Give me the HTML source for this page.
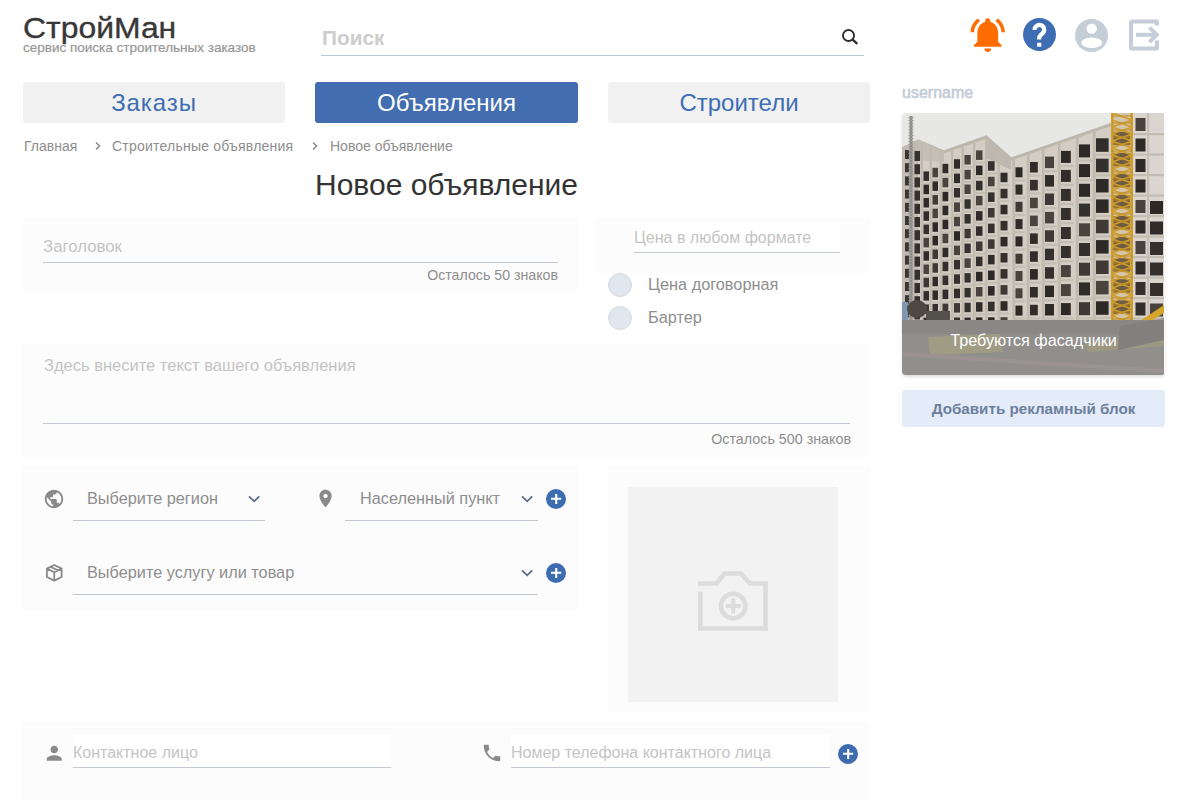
<!DOCTYPE html>
<html><head><meta charset="utf-8">
<style>
*{box-sizing:border-box;margin:0;padding:0}
html,body{width:1200px;height:800px;overflow:hidden;background:#fff;font-family:"Liberation Sans",sans-serif}
.a{position:absolute}
.t{white-space:nowrap;line-height:1}
.card{position:absolute;background:#fcfcfc}
.ul{position:absolute;height:1px;background:#c3c9d1}
.nav{position:absolute;top:82px;height:41px;border-radius:3px;background:#f1f1f1;color:#3d6db5;text-align:center;line-height:41px}
.nav.act{background:#426db0;color:#fff}
.ph{color:#c4c4c4}
.gr{color:#8e8e8e}
svg{position:absolute;overflow:visible}
</style></head><body>

<!-- header -->
<div class="a t" style="left:23px;top:14px;font-size:29px;color:#383838;transform:scaleX(1.1);transform-origin:0 0;-webkit-text-stroke:0.35px #383838">СтройМан</div>
<div class="a t" style="left:23px;top:41px;font-size:13.5px;color:#979797;-webkit-text-stroke:0.2px #979797">сервис поиска строительных заказов</div>

<div class="a t" style="left:322px;top:28px;font-size:20.8px;font-weight:bold;color:#cdcdcd">Поиск</div>
<div class="ul" style="left:321px;top:55px;width:543px;background:#bcc5d0"></div>
<svg style="left:839px;top:26px" width="24" height="24" viewBox="0 0 24 24"><circle cx="9.5" cy="9.5" r="5.55" fill="none" stroke="#2e2e2e" stroke-width="1.9"/><path d="M13.4 13.4L18.3 17.9" stroke="#2e2e2e" stroke-width="2.4"/></svg>

<!-- header icons -->
<svg style="left:967px;top:14px" width="41.5" height="41.5" viewBox="0 0 24 24"><path fill="#ff6d00" d="M7.58 4.08L6.15 2.65C3.75 4.48 2.17 7.3 2.03 10.5h2c.15-2.65 1.51-4.97 3.55-6.42zm12.39 6.42h2c-.15-3.2-1.73-6.02-4.12-7.85l-1.42 1.43c2.02 1.45 3.39 3.77 3.54 6.42zM18 11c0-3.07-1.64-5.64-4.5-6.32V4c0-.83-.67-1.5-1.5-1.5s-1.5.67-1.5 1.5v.68C7.63 5.36 6 7.92 6 11v5l-2 2v1h16v-1l-2-2v-5zm-6 11c.14 0 .27-.01.4-.04.65-.14 1.18-.58 1.44-1.18.1-.24.15-.5.15-.78h-4c.01 1.1.9 2 2.01 2z"/></svg>
<svg style="left:1023px;top:18px" width="33" height="33" viewBox="0 0 33 33"><circle cx="16.5" cy="16.5" r="16.5" fill="#3f6db4"/><path d="M11.6 11.9A4.8 4.8 0 1 1 19.1 15.7C17.2 17.1 16.2 17.9 16.2 20.2V21.6" fill="none" stroke="#fff" stroke-width="4.2"/><rect x="14.1" y="24.7" width="4.2" height="4" fill="#fff"/></svg>
<svg style="left:1074.5px;top:18.5px" width="33" height="33" viewBox="0 0 33 33"><circle cx="16.5" cy="16.5" r="16.5" fill="#c5cdd8"/><circle cx="16.7" cy="9.6" r="5.2" fill="#fff"/><ellipse cx="16.7" cy="23.8" rx="10.5" ry="5.3" fill="#fff"/></svg>
<svg style="left:1129px;top:20px" width="31" height="31" viewBox="0 0 31 31"><path d="M28 5.5V2.5a1 1 0 0 0-1-1H3a1 1 0 0 0-1 1v25a1 1 0 0 0 1 1h24a1 1 0 0 0 1-1v-7" fill="none" stroke="#c5cdd8" stroke-width="4"/><path d="M7 14.8H27" stroke="#c5cdd8" stroke-width="4" fill="none"/><path d="M20.5 7.6L27.8 14.8L20.5 22" stroke="#c5cdd8" stroke-width="4" fill="none"/></svg>

<!-- nav -->
<div class="nav" style="left:23px;width:262px;font-size:24px;letter-spacing:0.9px">Заказы</div>
<div class="nav act" style="left:315px;width:263px;font-size:24px">Объявления</div>
<div class="nav" style="left:608px;width:262px;font-size:24px">Строители</div>

<!-- breadcrumb -->
<div class="a t gr" style="left:24px;top:139px;font-size:14px">Главная</div>
<svg style="left:94px;top:141px" width="8" height="10" viewBox="0 0 8 10"><path d="M2 1.5L5.5 5L2 8.5" fill="none" stroke="#8e8e8e" stroke-width="1.6"/></svg>
<div class="a t gr" style="left:112px;top:139px;font-size:14px;letter-spacing:0.22px">Строительные объявления</div>
<svg style="left:311px;top:141px" width="8" height="10" viewBox="0 0 8 10"><path d="M2 1.5L5.5 5L2 8.5" fill="none" stroke="#8e8e8e" stroke-width="1.6"/></svg>
<div class="a t gr" style="left:330px;top:139px;font-size:14px">Новое объявление</div>

<div class="a t" style="left:315px;top:170px;font-size:30px;color:#333">Новое объявление</div>

<!-- card title -->
<div class="card" style="left:23px;top:218px;width:555px;height:75px"></div>
<div class="a t ph" style="left:43px;top:239px;font-size:16.8px">Заголовок</div>
<div class="ul" style="left:43px;top:262px;width:515px"></div>
<div class="a t gr" style="right:642px;top:268px;font-size:14.2px">Осталось 50 знаков</div>

<!-- price -->
<div class="card" style="left:595px;top:218px;width:275px;height:54.5px"></div>
<div class="a" style="left:634px;top:222px;width:206px;height:31px;background:#fff"></div>
<div class="a t ph" style="left:634px;top:230px;font-size:16px">Цена в любом формате</div>
<div class="ul" style="left:634px;top:252px;width:206px"></div>
<div class="a" style="left:608px;top:273px;width:24px;height:24px;border-radius:50%;background:#e1e7ee;border:1px solid #d6dbe1"></div>
<div class="a t gr" style="left:648px;top:276px;font-size:16.3px">Цена договорная</div>
<div class="a" style="left:608px;top:306px;width:24px;height:24px;border-radius:50%;background:#e1e7ee;border:1px solid #d6dbe1"></div>
<div class="a t gr" style="left:648px;top:309px;font-size:16.3px">Бартер</div>

<!-- text card -->
<div class="card" style="left:22px;top:344px;width:847px;height:113px"></div>
<div class="a t ph" style="left:44px;top:357px;font-size:16.5px">Здесь внесите текст вашего объявления</div>
<div class="ul" style="left:43px;top:423px;width:807px"></div>
<div class="a t gr" style="right:349px;top:432px;font-size:14.3px">Осталось 500 знаков</div>

<!-- region card -->
<div class="card" style="left:22px;top:466px;width:556px;height:145px"></div>
<svg style="left:43px;top:487.5px" width="22" height="22" viewBox="0 0 24 24"><path fill="#8a8a8a" d="M12 2C6.48 2 2 6.48 2 12s4.48 10 10 10 10-4.48 10-10S17.52 2 12 2zm-1 17.93c-3.950-.49-7-3.850-7-7.930 0-.62.08-1.210.21-1.790L9 15v1c0 1.100.9 2 2 2v1.930zm6.900-2.540c-.26-.81-1-1.390-1.900-1.390h-1v-3c0-.55-.45-1-1-1H8v-2h2c.55 0 1-.45 1-1V7h2c1.100 0 2-.9 2-2v-.41c2.930 1.190 5 4.060 5 7.410 0 2.080-.8 3.970-2.100 5.390z"/></svg>
<div class="a t gr" style="left:87px;top:490px;font-size:16.3px">Выберите регион</div>
<svg style="left:248px;top:494px" width="12" height="9" viewBox="0 0 12 9"><path d="M1 2.4L6.2 7.3L11.2 2.4" fill="none" stroke="#5b6c86" stroke-width="1.8"/></svg>
<div class="ul" style="left:73px;top:520px;width:192px"></div>
<svg style="left:315.4px;top:488.1px" width="21.1" height="21.1" viewBox="0 0 24 24"><path fill="#8a8a8a" d="M12 2C8.130 2 5 5.130 5 9c0 5.250 7 13 7 13s7-7.750 7-13c0-3.870-3.130-7-7-7zm0 9.500c-1.380 0-2.500-1.120-2.500-2.500s1.120-2.500 2.500-2.500 2.500 1.120 2.500 2.500-1.120 2.500-2.500 2.500z"/></svg>
<div class="a t gr" style="left:360px;top:490px;font-size:16.3px">Населенный пункт</div>
<svg style="left:521px;top:494px" width="12" height="9" viewBox="0 0 12 9"><path d="M1 2.4L6.2 7.3L11.2 2.4" fill="none" stroke="#5b6c86" stroke-width="1.8"/></svg>
<div class="ul" style="left:345px;top:520px;width:193px"></div>
<svg style="left:546px;top:489px" width="20" height="20" viewBox="0 0 20 20"><circle cx="10" cy="10" r="10" fill="#3e6cb0"/><path d="M10.2 4.9V15M5 9.8H15.2" stroke="#fff" stroke-width="2.1"/></svg>

<svg style="left:0;top:0" width="1" height="1" viewBox="0 0 1 1"><path d="M54.25 565L46.9 568.6V577L54.25 580.6L61.6 577V568.6Z M46.9 568.6L54.25 572.2L61.6 568.6 M54.25 572.2V580.6 M50.5 566.8L57.9 570.4" fill="none" stroke="#8a8a8a" stroke-width="1.8" stroke-linejoin="round"/></svg>
<div class="a t gr" style="left:87px;top:564px;font-size:16.3px">Выберите услугу или товар</div>
<svg style="left:521px;top:568px" width="12" height="9" viewBox="0 0 12 9"><path d="M1 2.4L6.2 7.3L11.2 2.4" fill="none" stroke="#5b6c86" stroke-width="1.8"/></svg>
<div class="ul" style="left:73px;top:594px;width:465px"></div>
<svg style="left:546px;top:563px" width="20" height="20" viewBox="0 0 20 20"><circle cx="10" cy="10" r="10" fill="#3e6cb0"/><path d="M10.2 4.9V15M5 9.8H15.2" stroke="#fff" stroke-width="2.1"/></svg>

<!-- photo card -->
<div class="card" style="left:608px;top:466px;width:262px;height:246px"></div>
<div class="a" style="left:628px;top:487px;width:210px;height:215px;background:#f2f2f2"></div>
<svg style="left:0;top:0" width="1" height="1" viewBox="0 0 1 1"><path d="M698 583.5H716.5L724.5 573.5H741L750 583.5H765.5V628.5H700.3V591.5" fill="none" stroke="#dcdcdc" stroke-width="4.5"/><circle cx="733.2" cy="606" r="12.3" fill="none" stroke="#dcdcdc" stroke-width="4.5"/><path d="M733.2 598.5V613.5M725.7 606H740.7" stroke="#dcdcdc" stroke-width="4"/></svg>

<!-- contact card -->
<div class="card" style="left:22px;top:722px;width:847px;height:78px"></div>
<svg style="left:42.9px;top:741.9px" width="22.5" height="22.5" viewBox="0 0 24 24"><path fill="#8a8a8a" d="M12 12c2.210 0 4-1.790 4-4s-1.790-4-4-4-4 1.790-4 4 1.790 4 4 4zm0 2c-2.670 0-8 1.340-8 4v2h16v-2c0-2.660-5.330-4-8-4z"/></svg>
<div class="a" style="left:73px;top:735px;width:318px;height:32px;background:#fff"></div>
<div class="a t ph" style="left:73px;top:744.5px;font-size:16px">Контактное лицо</div>
<div class="ul" style="left:73px;top:767px;width:318px"></div>
<svg style="left:481.2px;top:742px" width="22" height="22" viewBox="0 0 24 24"><path fill="#8a8a8a" d="M6.620 10.790c1.440 2.830 3.760 5.140 6.590 6.590l2.200-2.200c.27-.27.67-.36 1.020-.24 1.120.37 2.330.57 3.570.57.55 0 1 .45 1 1V20c0 .55-.45 1-1 1-9.390 0-17-7.610-17-17 0-.55.45-1 1-1h3.500c.55 0 1 .45 1 1 0 1.250.2 2.450.57 3.570.11.35.03.74-.25 1.020l-2.200 2.200z"/></svg>
<div class="a" style="left:511px;top:735px;width:319px;height:32px;background:#fff"></div>
<div class="a t ph" style="left:511px;top:744.5px;font-size:16px">Номер телефона контактного лица</div>
<div class="ul" style="left:511px;top:767px;width:319px"></div>
<svg style="left:838.3px;top:744px" width="20" height="20" viewBox="0 0 20 20"><circle cx="10" cy="10" r="10" fill="#3e6cb0"/><path d="M10.2 4.9V15M5 9.8H15.2" stroke="#fff" stroke-width="2.1"/></svg>

<!-- right column -->
<div class="a t" style="left:902px;top:84.5px;font-size:16px;color:#c3cbd7;-webkit-text-stroke:0.55px #c3cbd7">username</div>
<div class="a" style="left:902px;top:113px;width:263px;height:262px;border-radius:4px;overflow:hidden;box-shadow:0 2px 3px rgba(0,0,0,0.12)">
<svg style="left:0;top:0" width="263" height="262" viewBox="0 0 263 262" preserveAspectRatio="none"><defs><linearGradient id="sky" x1="0" y1="0" x2="0" y2="1"><stop offset="0" stop-color="#e8e8e7"/><stop offset="1" stop-color="#e0e0df"/></linearGradient><clipPath id="bc"><polygon points="0.0,36.0 16.0,28.0 42.0,39.0 84.0,24.0 109.0,46.0 209.0,11.5 209.0,0.0 262.0,0.0 262.0,262.0 0.0,262.0"/></clipPath></defs><rect width="262" height="262" fill="url(#sky)"/><polygon points="0.0,35.0 16.0,27.0 42.0,38.0 84.0,23.0 109.0,45.0 209.0,10.5 209.0,0.0 262.0,0.0 262.0,262.0 0.0,262.0" fill="#d3cdc3"/><polyline points="0.0,36.0 16.0,28.0 42.0,39.0 84.0,24.0 109.0,46.0 209.0,11.5" fill="none" stroke="#bdb6ab" stroke-width="3"/><polygon points="84.0,24.0 109.0,45.0 109.0,57.0 84.0,45.0" fill="#bdb7af"/><polygon points="16.0,27.0 42.0,39.0 42.0,49.0 16.0,47.0" fill="#c4beb5"/><polygon points="0.0,35.0 16.0,27.0 16.0,207.0 0.0,207.0" fill="#c2bbb1"/><g clip-path="url(#bc)"><rect x="18.5" y="17.0" width="2.4" height="190.0" fill="#c0b9ae"/></g><g clip-path="url(#bc)"><rect x="27.5" y="17.0" width="2.4" height="190.0" fill="#c0b9ae"/></g><g clip-path="url(#bc)"><rect x="37.5" y="17.0" width="2.4" height="190.0" fill="#c0b9ae"/></g><g clip-path="url(#bc)"><rect x="49.0" y="17.0" width="2.4" height="190.0" fill="#c0b9ae"/></g><g clip-path="url(#bc)"><rect x="59.5" y="17.0" width="2.4" height="190.0" fill="#c0b9ae"/></g><g clip-path="url(#bc)"><rect x="71.0" y="17.0" width="2.4" height="190.0" fill="#c0b9ae"/></g><g clip-path="url(#bc)"><rect x="83.0" y="17.0" width="2.4" height="190.0" fill="#c0b9ae"/></g><g clip-path="url(#bc)"><rect x="95.5" y="17.0" width="2.4" height="190.0" fill="#c0b9ae"/></g><rect x="21.5" y="58.4" width="5.5" height="9.5" fill="#302c29"/><rect x="18.5" y="69.7" width="12.0" height="2.0" fill="#c4bdb2"/><rect x="30.5" y="54.8" width="5.5" height="9.5" fill="#4a433d"/><rect x="27.5" y="66.1" width="12.0" height="2.0" fill="#c4bdb2"/><rect x="40.5" y="50.8" width="5.8" height="9.5" fill="#302c29"/><rect x="37.5" y="62.1" width="12.0" height="2.0" fill="#c4bdb2"/><rect x="52.0" y="46.2" width="6.0" height="9.5" fill="#302c29"/><rect x="49.0" y="57.5" width="12.0" height="2.0" fill="#c4bdb2"/><rect x="62.5" y="42.0" width="6.2" height="9.5" fill="#4a433d"/><rect x="59.5" y="53.3" width="12.0" height="2.0" fill="#c4bdb2"/><rect x="74.0" y="37.4" width="6.5" height="9.5" fill="#4a433d"/><rect x="71.0" y="48.7" width="12.0" height="2.0" fill="#c4bdb2"/><rect x="21.5" y="71.7" width="5.5" height="9.5" fill="#2c2927"/><rect x="18.5" y="83.0" width="12.0" height="2.0" fill="#c4bdb2"/><rect x="30.5" y="68.4" width="5.5" height="9.5" fill="#2c2927"/><rect x="27.5" y="79.7" width="12.0" height="2.0" fill="#c4bdb2"/><rect x="40.5" y="64.8" width="5.8" height="9.5" fill="#4a433d"/><rect x="37.5" y="76.1" width="12.0" height="2.0" fill="#c4bdb2"/><rect x="52.0" y="60.6" width="6.0" height="9.5" fill="#302c29"/><rect x="49.0" y="71.9" width="12.0" height="2.0" fill="#c4bdb2"/><rect x="62.5" y="56.8" width="6.2" height="9.5" fill="#4a433d"/><rect x="59.5" y="68.1" width="12.0" height="2.0" fill="#c4bdb2"/><rect x="74.0" y="52.6" width="6.5" height="9.5" fill="#2c2927"/><rect x="71.0" y="63.9" width="12.0" height="2.0" fill="#c4bdb2"/><rect x="86.0" y="48.2" width="6.6" height="9.5" fill="#34302d"/><rect x="83.0" y="59.5" width="12.0" height="2.0" fill="#c4bdb2"/><rect x="21.5" y="85.0" width="5.5" height="9.5" fill="#302c29"/><rect x="18.5" y="96.3" width="12.0" height="2.0" fill="#c4bdb2"/><rect x="30.5" y="82.1" width="5.5" height="9.5" fill="#3e3935"/><rect x="27.5" y="93.4" width="12.0" height="2.0" fill="#c4bdb2"/><rect x="40.5" y="78.8" width="5.8" height="9.5" fill="#2c2927"/><rect x="37.5" y="90.1" width="12.0" height="2.0" fill="#c4bdb2"/><rect x="52.0" y="75.0" width="6.0" height="9.5" fill="#34302d"/><rect x="49.0" y="86.3" width="12.0" height="2.0" fill="#c4bdb2"/><rect x="62.5" y="71.5" width="6.2" height="9.5" fill="#4a433d"/><rect x="59.5" y="82.8" width="12.0" height="2.0" fill="#c4bdb2"/><rect x="74.0" y="67.8" width="6.5" height="9.5" fill="#34302d"/><rect x="71.0" y="79.1" width="12.0" height="2.0" fill="#c4bdb2"/><rect x="86.0" y="63.8" width="6.6" height="9.5" fill="#4a433d"/><rect x="83.0" y="75.1" width="12.0" height="2.0" fill="#c4bdb2"/><rect x="98.5" y="59.7" width="7.0" height="9.5" fill="#302c29"/><rect x="95.5" y="71.0" width="12.0" height="2.0" fill="#c4bdb2"/><rect x="21.5" y="98.3" width="5.5" height="9.5" fill="#302c29"/><rect x="18.5" y="109.6" width="12.0" height="2.0" fill="#c4bdb2"/><rect x="30.5" y="95.7" width="5.5" height="9.5" fill="#4a433d"/><rect x="27.5" y="107.0" width="12.0" height="2.0" fill="#c4bdb2"/><rect x="40.5" y="92.7" width="5.8" height="9.5" fill="#2c2927"/><rect x="37.5" y="104.0" width="12.0" height="2.0" fill="#c4bdb2"/><rect x="52.0" y="89.4" width="6.0" height="9.5" fill="#4a433d"/><rect x="49.0" y="100.7" width="12.0" height="2.0" fill="#c4bdb2"/><rect x="62.5" y="86.3" width="6.2" height="9.5" fill="#34302d"/><rect x="59.5" y="97.6" width="12.0" height="2.0" fill="#c4bdb2"/><rect x="74.0" y="82.9" width="6.5" height="9.5" fill="#4a433d"/><rect x="71.0" y="94.2" width="12.0" height="2.0" fill="#c4bdb2"/><rect x="86.0" y="79.4" width="6.6" height="9.5" fill="#34302d"/><rect x="83.0" y="90.7" width="12.0" height="2.0" fill="#c4bdb2"/><rect x="98.5" y="75.8" width="7.0" height="9.5" fill="#34302d"/><rect x="95.5" y="87.1" width="12.0" height="2.0" fill="#c4bdb2"/><rect x="21.5" y="111.6" width="5.5" height="9.5" fill="#34302d"/><rect x="18.5" y="122.9" width="12.0" height="2.0" fill="#c4bdb2"/><rect x="30.5" y="109.3" width="5.5" height="9.5" fill="#2c2927"/><rect x="27.5" y="120.6" width="12.0" height="2.0" fill="#c4bdb2"/><rect x="40.5" y="106.7" width="5.8" height="9.5" fill="#2c2927"/><rect x="37.5" y="118.0" width="12.0" height="2.0" fill="#c4bdb2"/><rect x="52.0" y="103.8" width="6.0" height="9.5" fill="#4a433d"/><rect x="49.0" y="115.1" width="12.0" height="2.0" fill="#c4bdb2"/><rect x="62.5" y="101.1" width="6.2" height="9.5" fill="#34302d"/><rect x="59.5" y="112.4" width="12.0" height="2.0" fill="#c4bdb2"/><rect x="74.0" y="98.1" width="6.5" height="9.5" fill="#302c29"/><rect x="71.0" y="109.4" width="12.0" height="2.0" fill="#c4bdb2"/><rect x="86.0" y="95.0" width="6.6" height="9.5" fill="#3e3935"/><rect x="83.0" y="106.3" width="12.0" height="2.0" fill="#c4bdb2"/><rect x="98.5" y="91.8" width="7.0" height="9.5" fill="#302c29"/><rect x="95.5" y="103.1" width="12.0" height="2.0" fill="#c4bdb2"/><rect x="21.5" y="124.9" width="5.5" height="9.5" fill="#4a433d"/><rect x="18.5" y="136.2" width="12.0" height="2.0" fill="#c4bdb2"/><rect x="30.5" y="122.9" width="5.5" height="9.5" fill="#2c2927"/><rect x="27.5" y="134.2" width="12.0" height="2.0" fill="#c4bdb2"/><rect x="40.5" y="120.7" width="5.8" height="9.5" fill="#4a433d"/><rect x="37.5" y="132.0" width="12.0" height="2.0" fill="#c4bdb2"/><rect x="52.0" y="118.2" width="6.0" height="9.5" fill="#2c2927"/><rect x="49.0" y="129.5" width="12.0" height="2.0" fill="#c4bdb2"/><rect x="62.5" y="115.8" width="6.2" height="9.5" fill="#3e3935"/><rect x="59.5" y="127.1" width="12.0" height="2.0" fill="#c4bdb2"/><rect x="74.0" y="113.3" width="6.5" height="9.5" fill="#302c29"/><rect x="71.0" y="124.6" width="12.0" height="2.0" fill="#c4bdb2"/><rect x="86.0" y="110.6" width="6.6" height="9.5" fill="#34302d"/><rect x="83.0" y="121.9" width="12.0" height="2.0" fill="#c4bdb2"/><rect x="98.5" y="107.9" width="7.0" height="9.5" fill="#34302d"/><rect x="95.5" y="119.2" width="12.0" height="2.0" fill="#c4bdb2"/><rect x="21.5" y="138.2" width="5.5" height="9.5" fill="#302c29"/><rect x="18.5" y="149.5" width="12.0" height="2.0" fill="#c4bdb2"/><rect x="30.5" y="136.5" width="5.5" height="9.5" fill="#3e3935"/><rect x="27.5" y="147.8" width="12.0" height="2.0" fill="#c4bdb2"/><rect x="40.5" y="134.7" width="5.8" height="9.5" fill="#302c29"/><rect x="37.5" y="146.0" width="12.0" height="2.0" fill="#c4bdb2"/><rect x="52.0" y="132.6" width="6.0" height="9.5" fill="#4a433d"/><rect x="49.0" y="143.9" width="12.0" height="2.0" fill="#c4bdb2"/><rect x="62.5" y="130.6" width="6.2" height="9.5" fill="#34302d"/><rect x="59.5" y="141.9" width="12.0" height="2.0" fill="#c4bdb2"/><rect x="74.0" y="128.5" width="6.5" height="9.5" fill="#3e3935"/><rect x="71.0" y="139.8" width="12.0" height="2.0" fill="#c4bdb2"/><rect x="86.0" y="126.3" width="6.6" height="9.5" fill="#3e3935"/><rect x="83.0" y="137.6" width="12.0" height="2.0" fill="#c4bdb2"/><rect x="98.5" y="123.9" width="7.0" height="9.5" fill="#2c2927"/><rect x="95.5" y="135.2" width="12.0" height="2.0" fill="#c4bdb2"/><rect x="21.5" y="151.5" width="5.5" height="9.5" fill="#4a433d"/><rect x="18.5" y="162.8" width="12.0" height="2.0" fill="#c4bdb2"/><rect x="30.5" y="150.2" width="5.5" height="9.5" fill="#3e3935"/><rect x="27.5" y="161.5" width="12.0" height="2.0" fill="#c4bdb2"/><rect x="40.5" y="148.7" width="5.8" height="9.5" fill="#34302d"/><rect x="37.5" y="160.0" width="12.0" height="2.0" fill="#c4bdb2"/><rect x="52.0" y="146.9" width="6.0" height="9.5" fill="#34302d"/><rect x="49.0" y="158.2" width="12.0" height="2.0" fill="#c4bdb2"/><rect x="62.5" y="145.4" width="6.2" height="9.5" fill="#4a433d"/><rect x="59.5" y="156.7" width="12.0" height="2.0" fill="#c4bdb2"/><rect x="74.0" y="143.7" width="6.5" height="9.5" fill="#34302d"/><rect x="71.0" y="155.0" width="12.0" height="2.0" fill="#c4bdb2"/><rect x="86.0" y="141.9" width="6.6" height="9.5" fill="#302c29"/><rect x="83.0" y="153.2" width="12.0" height="2.0" fill="#c4bdb2"/><rect x="98.5" y="140.0" width="7.0" height="9.5" fill="#34302d"/><rect x="95.5" y="151.3" width="12.0" height="2.0" fill="#c4bdb2"/><rect x="21.5" y="164.8" width="5.5" height="9.5" fill="#3e3935"/><rect x="18.5" y="176.1" width="12.0" height="2.0" fill="#c4bdb2"/><rect x="30.5" y="163.8" width="5.5" height="9.5" fill="#302c29"/><rect x="27.5" y="175.1" width="12.0" height="2.0" fill="#c4bdb2"/><rect x="40.5" y="162.6" width="5.8" height="9.5" fill="#34302d"/><rect x="37.5" y="173.9" width="12.0" height="2.0" fill="#c4bdb2"/><rect x="52.0" y="161.3" width="6.0" height="9.5" fill="#34302d"/><rect x="49.0" y="172.6" width="12.0" height="2.0" fill="#c4bdb2"/><rect x="62.5" y="160.1" width="6.2" height="9.5" fill="#34302d"/><rect x="59.5" y="171.4" width="12.0" height="2.0" fill="#c4bdb2"/><rect x="74.0" y="158.8" width="6.5" height="9.5" fill="#2c2927"/><rect x="71.0" y="170.1" width="12.0" height="2.0" fill="#c4bdb2"/><rect x="86.0" y="157.5" width="6.6" height="9.5" fill="#2c2927"/><rect x="83.0" y="168.8" width="12.0" height="2.0" fill="#c4bdb2"/><rect x="98.5" y="156.1" width="7.0" height="9.5" fill="#34302d"/><rect x="95.5" y="167.4" width="12.0" height="2.0" fill="#c4bdb2"/><rect x="21.5" y="178.1" width="5.5" height="9.5" fill="#302c29"/><rect x="18.5" y="189.4" width="12.0" height="2.0" fill="#c4bdb2"/><rect x="30.5" y="177.4" width="5.5" height="9.5" fill="#302c29"/><rect x="27.5" y="188.7" width="12.0" height="2.0" fill="#c4bdb2"/><rect x="40.5" y="176.6" width="5.8" height="9.5" fill="#302c29"/><rect x="37.5" y="187.9" width="12.0" height="2.0" fill="#c4bdb2"/><rect x="52.0" y="175.7" width="6.0" height="9.5" fill="#302c29"/><rect x="49.0" y="187.0" width="12.0" height="2.0" fill="#c4bdb2"/><rect x="62.5" y="174.9" width="6.2" height="9.5" fill="#34302d"/><rect x="59.5" y="186.2" width="12.0" height="2.0" fill="#c4bdb2"/><rect x="74.0" y="174.0" width="6.5" height="9.5" fill="#4a433d"/><rect x="71.0" y="185.3" width="12.0" height="2.0" fill="#c4bdb2"/><rect x="86.0" y="173.1" width="6.6" height="9.5" fill="#2c2927"/><rect x="83.0" y="184.4" width="12.0" height="2.0" fill="#c4bdb2"/><rect x="98.5" y="172.1" width="7.0" height="9.5" fill="#3e3935"/><rect x="95.5" y="183.4" width="12.0" height="2.0" fill="#c4bdb2"/><rect x="21.5" y="191.4" width="5.5" height="9.5" fill="#3e3935"/><rect x="18.5" y="202.7" width="12.0" height="2.0" fill="#c4bdb2"/><rect x="30.5" y="191.0" width="5.5" height="9.5" fill="#34302d"/><rect x="27.5" y="202.3" width="12.0" height="2.0" fill="#c4bdb2"/><rect x="40.5" y="190.6" width="5.8" height="9.5" fill="#3e3935"/><rect x="37.5" y="201.9" width="12.0" height="2.0" fill="#c4bdb2"/><rect x="52.0" y="190.1" width="6.0" height="9.5" fill="#3e3935"/><rect x="49.0" y="201.4" width="12.0" height="2.0" fill="#c4bdb2"/><rect x="62.5" y="189.7" width="6.2" height="9.5" fill="#34302d"/><rect x="59.5" y="201.0" width="12.0" height="2.0" fill="#c4bdb2"/><rect x="74.0" y="189.2" width="6.5" height="9.5" fill="#302c29"/><rect x="71.0" y="200.5" width="12.0" height="2.0" fill="#c4bdb2"/><rect x="86.0" y="188.7" width="6.6" height="9.5" fill="#34302d"/><rect x="83.0" y="200.0" width="12.0" height="2.0" fill="#c4bdb2"/><rect x="98.5" y="188.2" width="7.0" height="9.5" fill="#2c2927"/><rect x="95.5" y="199.5" width="12.0" height="2.0" fill="#c4bdb2"/><rect x="21.5" y="204.7" width="5.5" height="2.3" fill="#2c2927"/><rect x="18.5" y="216.0" width="12.0" height="2.0" fill="#c4bdb2"/><rect x="30.5" y="204.7" width="5.5" height="2.3" fill="#34302d"/><rect x="27.5" y="216.0" width="12.0" height="2.0" fill="#c4bdb2"/><rect x="40.5" y="204.6" width="5.8" height="2.4" fill="#34302d"/><rect x="37.5" y="215.9" width="12.0" height="2.0" fill="#c4bdb2"/><rect x="52.0" y="204.5" width="6.0" height="2.5" fill="#34302d"/><rect x="49.0" y="215.8" width="12.0" height="2.0" fill="#c4bdb2"/><rect x="62.5" y="204.5" width="6.2" height="2.5" fill="#302c29"/><rect x="59.5" y="215.8" width="12.0" height="2.0" fill="#c4bdb2"/><rect x="74.0" y="204.4" width="6.5" height="2.6" fill="#302c29"/><rect x="71.0" y="215.7" width="12.0" height="2.0" fill="#c4bdb2"/><rect x="86.0" y="204.3" width="6.6" height="2.7" fill="#2c2927"/><rect x="83.0" y="215.6" width="12.0" height="2.0" fill="#c4bdb2"/><rect x="98.5" y="204.2" width="7.0" height="2.8" fill="#4a433d"/><rect x="95.5" y="215.5" width="12.0" height="2.0" fill="#c4bdb2"/><g clip-path="url(#bc)"><rect x="110.3" y="0.0" width="2.8" height="207.0" fill="#c0b9ae"/></g><g clip-path="url(#bc)"><rect x="124.8" y="0.0" width="2.8" height="207.0" fill="#c0b9ae"/></g><g clip-path="url(#bc)"><rect x="139.8" y="0.0" width="2.8" height="207.0" fill="#c0b9ae"/></g><g clip-path="url(#bc)"><rect x="155.8" y="0.0" width="2.8" height="207.0" fill="#c0b9ae"/></g><g clip-path="url(#bc)"><rect x="173.8" y="0.0" width="2.8" height="207.0" fill="#c0b9ae"/></g><g clip-path="url(#bc)"><rect x="190.8" y="0.0" width="2.8" height="207.0" fill="#c0b9ae"/></g><rect x="113.5" y="54.3" width="7.0" height="10.0" fill="#2c2927"/><rect x="110.3" y="66.3" width="13.0" height="2.2" fill="#c4bdb2"/><rect x="128.0" y="49.0" width="7.8" height="10.5" fill="#302c29"/><rect x="124.8" y="61.5" width="13.8" height="2.2" fill="#c4bdb2"/><rect x="143.0" y="43.6" width="9.0" height="11.5" fill="#4a433d"/><rect x="139.8" y="57.1" width="15.0" height="2.2" fill="#c4bdb2"/><rect x="159.0" y="37.9" width="9.8" height="12.0" fill="#2c2927"/><rect x="155.8" y="51.9" width="15.8" height="2.2" fill="#c4bdb2"/><rect x="177.0" y="31.4" width="11.0" height="13.0" fill="#2c2927"/><rect x="173.8" y="46.4" width="17.0" height="2.2" fill="#c4bdb2"/><rect x="194.0" y="25.3" width="12.6" height="13.5" fill="#302c29"/><rect x="190.8" y="40.8" width="18.6" height="2.2" fill="#c4bdb2"/><rect x="113.5" y="71.6" width="7.0" height="10.0" fill="#302c29"/><rect x="110.3" y="83.6" width="13.0" height="2.2" fill="#c4bdb2"/><rect x="128.0" y="66.9" width="7.8" height="10.5" fill="#34302d"/><rect x="124.8" y="79.4" width="13.8" height="2.2" fill="#c4bdb2"/><rect x="143.0" y="62.1" width="9.0" height="11.5" fill="#302c29"/><rect x="139.8" y="75.6" width="15.0" height="2.2" fill="#c4bdb2"/><rect x="159.0" y="56.9" width="9.8" height="12.0" fill="#302c29"/><rect x="155.8" y="70.9" width="15.8" height="2.2" fill="#c4bdb2"/><rect x="177.0" y="51.1" width="11.0" height="13.0" fill="#2c2927"/><rect x="173.8" y="66.1" width="17.0" height="2.2" fill="#c4bdb2"/><rect x="194.0" y="45.7" width="12.6" height="13.5" fill="#34302d"/><rect x="190.8" y="61.2" width="18.6" height="2.2" fill="#c4bdb2"/><rect x="113.5" y="88.8" width="7.0" height="10.0" fill="#3e3935"/><rect x="110.3" y="100.8" width="13.0" height="2.2" fill="#c4bdb2"/><rect x="128.0" y="84.7" width="7.8" height="10.5" fill="#4a433d"/><rect x="124.8" y="97.2" width="13.8" height="2.2" fill="#c4bdb2"/><rect x="143.0" y="80.5" width="9.0" height="11.5" fill="#3e3935"/><rect x="139.8" y="94.0" width="15.0" height="2.2" fill="#c4bdb2"/><rect x="159.0" y="75.9" width="9.8" height="12.0" fill="#34302d"/><rect x="155.8" y="89.9" width="15.8" height="2.2" fill="#c4bdb2"/><rect x="177.0" y="70.8" width="11.0" height="13.0" fill="#2c2927"/><rect x="173.8" y="85.8" width="17.0" height="2.2" fill="#c4bdb2"/><rect x="194.0" y="66.0" width="12.6" height="13.5" fill="#2c2927"/><rect x="190.8" y="81.5" width="18.6" height="2.2" fill="#c4bdb2"/><rect x="113.5" y="106.1" width="7.0" height="10.0" fill="#302c29"/><rect x="110.3" y="118.1" width="13.0" height="2.2" fill="#c4bdb2"/><rect x="128.0" y="102.6" width="7.8" height="10.5" fill="#4a433d"/><rect x="124.8" y="115.1" width="13.8" height="2.2" fill="#c4bdb2"/><rect x="143.0" y="98.9" width="9.0" height="11.5" fill="#4a433d"/><rect x="139.8" y="112.4" width="15.0" height="2.2" fill="#c4bdb2"/><rect x="159.0" y="95.0" width="9.8" height="12.0" fill="#34302d"/><rect x="155.8" y="109.0" width="15.8" height="2.2" fill="#c4bdb2"/><rect x="177.0" y="90.6" width="11.0" height="13.0" fill="#34302d"/><rect x="173.8" y="105.6" width="17.0" height="2.2" fill="#c4bdb2"/><rect x="194.0" y="86.4" width="12.6" height="13.5" fill="#2c2927"/><rect x="190.8" y="101.9" width="18.6" height="2.2" fill="#c4bdb2"/><rect x="113.5" y="123.4" width="7.0" height="10.0" fill="#2c2927"/><rect x="110.3" y="135.4" width="13.0" height="2.2" fill="#c4bdb2"/><rect x="128.0" y="120.4" width="7.8" height="10.5" fill="#302c29"/><rect x="124.8" y="132.9" width="13.8" height="2.2" fill="#c4bdb2"/><rect x="143.0" y="117.3" width="9.0" height="11.5" fill="#3e3935"/><rect x="139.8" y="130.8" width="15.0" height="2.2" fill="#c4bdb2"/><rect x="159.0" y="114.0" width="9.8" height="12.0" fill="#34302d"/><rect x="155.8" y="128.0" width="15.8" height="2.2" fill="#c4bdb2"/><rect x="177.0" y="110.3" width="11.0" height="13.0" fill="#4a433d"/><rect x="173.8" y="125.3" width="17.0" height="2.2" fill="#c4bdb2"/><rect x="194.0" y="106.8" width="12.6" height="13.5" fill="#3e3935"/><rect x="190.8" y="122.3" width="18.6" height="2.2" fill="#c4bdb2"/><rect x="113.5" y="140.7" width="7.0" height="10.0" fill="#3e3935"/><rect x="110.3" y="152.7" width="13.0" height="2.2" fill="#c4bdb2"/><rect x="128.0" y="138.3" width="7.8" height="10.5" fill="#302c29"/><rect x="124.8" y="150.8" width="13.8" height="2.2" fill="#c4bdb2"/><rect x="143.0" y="135.7" width="9.0" height="11.5" fill="#34302d"/><rect x="139.8" y="149.2" width="15.0" height="2.2" fill="#c4bdb2"/><rect x="159.0" y="133.0" width="9.8" height="12.0" fill="#34302d"/><rect x="155.8" y="147.0" width="15.8" height="2.2" fill="#c4bdb2"/><rect x="177.0" y="130.0" width="11.0" height="13.0" fill="#34302d"/><rect x="173.8" y="145.0" width="17.0" height="2.2" fill="#c4bdb2"/><rect x="194.0" y="127.1" width="12.6" height="13.5" fill="#2c2927"/><rect x="190.8" y="142.6" width="18.6" height="2.2" fill="#c4bdb2"/><rect x="113.5" y="158.0" width="7.0" height="10.0" fill="#4a433d"/><rect x="110.3" y="170.0" width="13.0" height="2.2" fill="#c4bdb2"/><rect x="128.0" y="156.1" width="7.8" height="10.5" fill="#2c2927"/><rect x="124.8" y="168.6" width="13.8" height="2.2" fill="#c4bdb2"/><rect x="143.0" y="154.2" width="9.0" height="11.5" fill="#34302d"/><rect x="139.8" y="167.7" width="15.0" height="2.2" fill="#c4bdb2"/><rect x="159.0" y="152.1" width="9.8" height="12.0" fill="#4a433d"/><rect x="155.8" y="166.1" width="15.8" height="2.2" fill="#c4bdb2"/><rect x="177.0" y="149.7" width="11.0" height="13.0" fill="#3e3935"/><rect x="173.8" y="164.7" width="17.0" height="2.2" fill="#c4bdb2"/><rect x="194.0" y="147.5" width="12.6" height="13.5" fill="#3e3935"/><rect x="190.8" y="163.0" width="18.6" height="2.2" fill="#c4bdb2"/><rect x="113.5" y="175.3" width="7.0" height="10.0" fill="#4a433d"/><rect x="110.3" y="187.3" width="13.0" height="2.2" fill="#c4bdb2"/><rect x="128.0" y="174.0" width="7.8" height="10.5" fill="#302c29"/><rect x="124.8" y="186.5" width="13.8" height="2.2" fill="#c4bdb2"/><rect x="143.0" y="172.6" width="9.0" height="11.5" fill="#2c2927"/><rect x="139.8" y="186.1" width="15.0" height="2.2" fill="#c4bdb2"/><rect x="159.0" y="171.1" width="9.8" height="12.0" fill="#4a433d"/><rect x="155.8" y="185.1" width="15.8" height="2.2" fill="#c4bdb2"/><rect x="177.0" y="169.4" width="11.0" height="13.0" fill="#302c29"/><rect x="173.8" y="184.4" width="17.0" height="2.2" fill="#c4bdb2"/><rect x="194.0" y="167.9" width="12.6" height="13.5" fill="#4a433d"/><rect x="190.8" y="183.4" width="18.6" height="2.2" fill="#c4bdb2"/><rect x="113.5" y="192.6" width="7.0" height="10.0" fill="#2c2927"/><rect x="110.3" y="204.6" width="13.0" height="2.2" fill="#c4bdb2"/><rect x="128.0" y="191.8" width="7.8" height="10.5" fill="#302c29"/><rect x="124.8" y="204.3" width="13.8" height="2.2" fill="#c4bdb2"/><rect x="143.0" y="191.0" width="9.0" height="11.5" fill="#2c2927"/><rect x="139.8" y="204.5" width="15.0" height="2.2" fill="#c4bdb2"/><rect x="159.0" y="190.1" width="9.8" height="12.0" fill="#2c2927"/><rect x="155.8" y="204.1" width="15.8" height="2.2" fill="#c4bdb2"/><rect x="177.0" y="189.2" width="11.0" height="13.0" fill="#3e3935"/><rect x="173.8" y="204.2" width="17.0" height="2.2" fill="#c4bdb2"/><rect x="194.0" y="188.3" width="12.6" height="13.5" fill="#2c2927"/><rect x="190.8" y="203.8" width="18.6" height="2.2" fill="#c4bdb2"/><rect x="3.0" y="37.0" width="4.2" height="9.0" fill="#3a3632"/><rect x="12.5" y="38.0" width="5.5" height="10.0" fill="#34302d"/><rect x="3.0" y="50.2" width="4.2" height="9.0" fill="#3a3632"/><rect x="12.5" y="51.2" width="5.5" height="10.0" fill="#34302d"/><rect x="3.0" y="63.4" width="4.2" height="9.0" fill="#3a3632"/><rect x="12.5" y="64.4" width="5.5" height="10.0" fill="#34302d"/><rect x="3.0" y="76.6" width="4.2" height="9.0" fill="#3a3632"/><rect x="12.5" y="77.6" width="5.5" height="10.0" fill="#34302d"/><rect x="3.0" y="89.8" width="4.2" height="9.0" fill="#3a3632"/><rect x="12.5" y="90.8" width="5.5" height="10.0" fill="#34302d"/><rect x="3.0" y="103.0" width="4.2" height="9.0" fill="#3a3632"/><rect x="12.5" y="104.0" width="5.5" height="10.0" fill="#34302d"/><rect x="3.0" y="116.2" width="4.2" height="9.0" fill="#3a3632"/><rect x="12.5" y="117.2" width="5.5" height="10.0" fill="#34302d"/><rect x="3.0" y="129.4" width="4.2" height="9.0" fill="#3a3632"/><rect x="12.5" y="130.4" width="5.5" height="10.0" fill="#34302d"/><rect x="3.0" y="142.6" width="4.2" height="9.0" fill="#3a3632"/><rect x="12.5" y="143.6" width="5.5" height="10.0" fill="#34302d"/><rect x="3.0" y="155.8" width="4.2" height="9.0" fill="#3a3632"/><rect x="12.5" y="156.8" width="5.5" height="10.0" fill="#34302d"/><rect x="3.0" y="169.0" width="4.2" height="9.0" fill="#3a3632"/><rect x="12.5" y="170.0" width="5.5" height="10.0" fill="#34302d"/><rect x="3.0" y="182.2" width="4.2" height="9.0" fill="#3a3632"/><rect x="12.5" y="183.2" width="5.5" height="10.0" fill="#34302d"/><rect x="3.0" y="195.4" width="4.2" height="9.0" fill="#3a3632"/><rect x="12.5" y="196.4" width="5.5" height="10.0" fill="#34302d"/><rect x="7.5" y="3.0" width="3.0" height="204.0" fill="#8f8c88"/><rect x="6.6" y="4.0" width="4.8" height="1.1" fill="#9c9c9c"/><rect x="6.6" y="7.0" width="4.8" height="1.1" fill="#9c9c9c"/><rect x="6.6" y="10.0" width="4.8" height="1.1" fill="#9c9c9c"/><rect x="6.6" y="13.0" width="4.8" height="1.1" fill="#9c9c9c"/><rect x="6.6" y="16.0" width="4.8" height="1.1" fill="#9c9c9c"/><rect x="6.6" y="19.0" width="4.8" height="1.1" fill="#9c9c9c"/><rect x="6.6" y="22.0" width="4.8" height="1.1" fill="#9c9c9c"/><rect x="6.6" y="25.0" width="4.8" height="1.1" fill="#9c9c9c"/><rect x="6.6" y="28.0" width="4.8" height="1.1" fill="#9c9c9c"/><rect x="6.6" y="31.0" width="4.8" height="1.1" fill="#9c9c9c"/><rect x="6.6" y="34.0" width="4.8" height="1.1" fill="#9c9c9c"/><rect x="6.6" y="37.0" width="4.8" height="1.1" fill="#9c9c9c"/><rect x="6.6" y="40.0" width="4.8" height="1.1" fill="#9c9c9c"/><rect x="6.6" y="43.0" width="4.8" height="1.1" fill="#9c9c9c"/><rect x="6.6" y="46.0" width="4.8" height="1.1" fill="#9c9c9c"/><rect x="6.6" y="49.0" width="4.8" height="1.1" fill="#9c9c9c"/><rect x="6.6" y="52.0" width="4.8" height="1.1" fill="#9c9c9c"/><rect x="6.6" y="55.0" width="4.8" height="1.1" fill="#9c9c9c"/><rect x="6.6" y="58.0" width="4.8" height="1.1" fill="#9c9c9c"/><rect x="6.6" y="61.0" width="4.8" height="1.1" fill="#9c9c9c"/><rect x="6.6" y="64.0" width="4.8" height="1.1" fill="#9c9c9c"/><rect x="6.6" y="67.0" width="4.8" height="1.1" fill="#9c9c9c"/><rect x="6.6" y="70.0" width="4.8" height="1.1" fill="#9c9c9c"/><rect x="6.6" y="73.0" width="4.8" height="1.1" fill="#9c9c9c"/><rect x="6.6" y="76.0" width="4.8" height="1.1" fill="#9c9c9c"/><rect x="6.6" y="79.0" width="4.8" height="1.1" fill="#9c9c9c"/><rect x="6.6" y="82.0" width="4.8" height="1.1" fill="#9c9c9c"/><rect x="6.6" y="85.0" width="4.8" height="1.1" fill="#9c9c9c"/><rect x="6.6" y="88.0" width="4.8" height="1.1" fill="#9c9c9c"/><rect x="6.6" y="91.0" width="4.8" height="1.1" fill="#9c9c9c"/><rect x="6.6" y="94.0" width="4.8" height="1.1" fill="#9c9c9c"/><rect x="6.6" y="97.0" width="4.8" height="1.1" fill="#9c9c9c"/><rect x="6.6" y="100.0" width="4.8" height="1.1" fill="#9c9c9c"/><rect x="6.6" y="103.0" width="4.8" height="1.1" fill="#9c9c9c"/><rect x="6.6" y="106.0" width="4.8" height="1.1" fill="#9c9c9c"/><rect x="6.6" y="109.0" width="4.8" height="1.1" fill="#9c9c9c"/><rect x="6.6" y="112.0" width="4.8" height="1.1" fill="#9c9c9c"/><rect x="6.6" y="115.0" width="4.8" height="1.1" fill="#9c9c9c"/><rect x="6.6" y="118.0" width="4.8" height="1.1" fill="#9c9c9c"/><rect x="6.6" y="121.0" width="4.8" height="1.1" fill="#9c9c9c"/><rect x="6.6" y="124.0" width="4.8" height="1.1" fill="#9c9c9c"/><rect x="6.6" y="127.0" width="4.8" height="1.1" fill="#9c9c9c"/><rect x="6.6" y="130.0" width="4.8" height="1.1" fill="#9c9c9c"/><rect x="6.6" y="133.0" width="4.8" height="1.1" fill="#9c9c9c"/><rect x="6.6" y="136.0" width="4.8" height="1.1" fill="#9c9c9c"/><rect x="6.6" y="139.0" width="4.8" height="1.1" fill="#9c9c9c"/><rect x="6.6" y="142.0" width="4.8" height="1.1" fill="#9c9c9c"/><rect x="6.6" y="145.0" width="4.8" height="1.1" fill="#9c9c9c"/><rect x="6.6" y="148.0" width="4.8" height="1.1" fill="#9c9c9c"/><rect x="6.6" y="151.0" width="4.8" height="1.1" fill="#9c9c9c"/><rect x="6.6" y="154.0" width="4.8" height="1.1" fill="#9c9c9c"/><rect x="6.6" y="157.0" width="4.8" height="1.1" fill="#9c9c9c"/><rect x="6.6" y="160.0" width="4.8" height="1.1" fill="#9c9c9c"/><rect x="6.6" y="163.0" width="4.8" height="1.1" fill="#9c9c9c"/><rect x="6.6" y="166.0" width="4.8" height="1.1" fill="#9c9c9c"/><rect x="6.6" y="169.0" width="4.8" height="1.1" fill="#9c9c9c"/><rect x="6.6" y="172.0" width="4.8" height="1.1" fill="#9c9c9c"/><rect x="6.6" y="175.0" width="4.8" height="1.1" fill="#9c9c9c"/><rect x="6.6" y="178.0" width="4.8" height="1.1" fill="#9c9c9c"/><rect x="6.6" y="181.0" width="4.8" height="1.1" fill="#9c9c9c"/><rect x="6.6" y="184.0" width="4.8" height="1.1" fill="#9c9c9c"/><rect x="6.6" y="187.0" width="4.8" height="1.1" fill="#9c9c9c"/><rect x="6.6" y="190.0" width="4.8" height="1.1" fill="#9c9c9c"/><rect x="6.6" y="193.0" width="4.8" height="1.1" fill="#9c9c9c"/><rect x="6.6" y="196.0" width="4.8" height="1.1" fill="#9c9c9c"/><rect x="6.6" y="199.0" width="4.8" height="1.1" fill="#9c9c9c"/><rect x="6.6" y="202.0" width="4.8" height="1.1" fill="#9c9c9c"/><rect x="6.6" y="205.0" width="4.8" height="1.1" fill="#9c9c9c"/><rect x="231.0" y="0.0" width="31.0" height="207.0" fill="#dad5ce"/><rect x="233.5" y="5.0" width="10.0" height="13.0" fill="#4a433d"/><rect x="231.0" y="20.0" width="31.0" height="2.2" fill="#c3bcb2"/><rect x="233.5" y="25.5" width="10.0" height="13.0" fill="#2c2927"/><rect x="231.0" y="40.5" width="31.0" height="2.2" fill="#c3bcb2"/><rect x="233.5" y="46.0" width="10.0" height="13.0" fill="#2c2927"/><rect x="231.0" y="61.0" width="31.0" height="2.2" fill="#c3bcb2"/><rect x="233.5" y="66.5" width="10.0" height="13.0" fill="#2c2927"/><rect x="231.0" y="81.5" width="31.0" height="2.2" fill="#c3bcb2"/><rect x="233.5" y="87.0" width="10.0" height="13.0" fill="#4a433d"/><rect x="248.0" y="88.0" width="13.0" height="13.0" fill="#2c2927"/><rect x="231.0" y="102.0" width="31.0" height="2.2" fill="#c3bcb2"/><rect x="233.5" y="107.5" width="10.0" height="13.0" fill="#302c29"/><rect x="248.0" y="108.5" width="13.0" height="13.0" fill="#302c29"/><rect x="231.0" y="122.5" width="31.0" height="2.2" fill="#c3bcb2"/><rect x="233.5" y="128.0" width="10.0" height="13.0" fill="#4a433d"/><rect x="248.0" y="129.0" width="13.0" height="13.0" fill="#34302d"/><rect x="231.0" y="143.0" width="31.0" height="2.2" fill="#c3bcb2"/><rect x="233.5" y="148.5" width="10.0" height="13.0" fill="#302c29"/><rect x="248.0" y="149.5" width="13.0" height="13.0" fill="#34302d"/><rect x="231.0" y="163.5" width="31.0" height="2.2" fill="#c3bcb2"/><rect x="233.5" y="169.0" width="10.0" height="13.0" fill="#34302d"/><rect x="248.0" y="170.0" width="13.0" height="13.0" fill="#34302d"/><rect x="231.0" y="184.0" width="31.0" height="2.2" fill="#c3bcb2"/><rect x="233.5" y="189.5" width="10.0" height="13.0" fill="#34302d"/><rect x="248.0" y="190.5" width="13.0" height="13.0" fill="#4a433d"/><rect x="231.0" y="204.5" width="31.0" height="2.2" fill="#c3bcb2"/><rect x="245.0" y="0.0" width="2.2" height="207.0" fill="#c5beb4"/><rect x="211.0" y="18.8" width="17.0" height="13.5" fill="#5a5048"/><rect x="211.0" y="39.9" width="17.0" height="13.5" fill="#5a5048"/><rect x="211.0" y="60.9" width="17.0" height="13.5" fill="#5a5048"/><rect x="211.0" y="82.0" width="17.0" height="13.5" fill="#5a5048"/><rect x="211.0" y="103.0" width="17.0" height="13.5" fill="#5a5048"/><rect x="211.0" y="124.1" width="17.0" height="13.5" fill="#5a5048"/><rect x="211.0" y="145.2" width="17.0" height="13.5" fill="#5a5048"/><rect x="211.0" y="166.2" width="17.0" height="13.5" fill="#5a5048"/><rect x="211.0" y="187.3" width="17.0" height="13.5" fill="#5a5048"/><rect x="209.0" y="0.0" width="2.6" height="207.0" fill="#d09c28"/><rect x="228.4" y="0.0" width="2.6" height="207.0" fill="#d09c28"/><line x1="210.0" y1="0.0" x2="230.0" y2="7.0" stroke="#d09c28" stroke-width="1.6"/><line x1="230.0" y1="7.0" x2="210.0" y2="14.0" stroke="#d09c28" stroke-width="1.6"/><line x1="210.0" y1="3.0" x2="230.0" y2="3.0" stroke="#b9871f" stroke-width="1.1"/><line x1="210.0" y1="7.0" x2="230.0" y2="14.0" stroke="#d09c28" stroke-width="1.6"/><line x1="230.0" y1="14.0" x2="210.0" y2="21.0" stroke="#d09c28" stroke-width="1.6"/><line x1="210.0" y1="10.0" x2="230.0" y2="10.0" stroke="#b9871f" stroke-width="1.1"/><line x1="210.0" y1="14.0" x2="230.0" y2="21.0" stroke="#d09c28" stroke-width="1.6"/><line x1="230.0" y1="21.0" x2="210.0" y2="28.0" stroke="#d09c28" stroke-width="1.6"/><line x1="210.0" y1="17.0" x2="230.0" y2="17.0" stroke="#b9871f" stroke-width="1.1"/><line x1="210.0" y1="21.0" x2="230.0" y2="28.0" stroke="#d09c28" stroke-width="1.6"/><line x1="230.0" y1="28.0" x2="210.0" y2="35.0" stroke="#d09c28" stroke-width="1.6"/><line x1="210.0" y1="24.0" x2="230.0" y2="24.0" stroke="#b9871f" stroke-width="1.1"/><line x1="210.0" y1="28.0" x2="230.0" y2="35.0" stroke="#d09c28" stroke-width="1.6"/><line x1="230.0" y1="35.0" x2="210.0" y2="42.0" stroke="#d09c28" stroke-width="1.6"/><line x1="210.0" y1="31.0" x2="230.0" y2="31.0" stroke="#b9871f" stroke-width="1.1"/><line x1="210.0" y1="35.0" x2="230.0" y2="42.0" stroke="#d09c28" stroke-width="1.6"/><line x1="230.0" y1="42.0" x2="210.0" y2="49.0" stroke="#d09c28" stroke-width="1.6"/><line x1="210.0" y1="38.0" x2="230.0" y2="38.0" stroke="#b9871f" stroke-width="1.1"/><line x1="210.0" y1="42.0" x2="230.0" y2="49.0" stroke="#d09c28" stroke-width="1.6"/><line x1="230.0" y1="49.0" x2="210.0" y2="56.0" stroke="#d09c28" stroke-width="1.6"/><line x1="210.0" y1="45.0" x2="230.0" y2="45.0" stroke="#b9871f" stroke-width="1.1"/><line x1="210.0" y1="49.0" x2="230.0" y2="56.0" stroke="#d09c28" stroke-width="1.6"/><line x1="230.0" y1="56.0" x2="210.0" y2="63.0" stroke="#d09c28" stroke-width="1.6"/><line x1="210.0" y1="52.0" x2="230.0" y2="52.0" stroke="#b9871f" stroke-width="1.1"/><line x1="210.0" y1="56.0" x2="230.0" y2="63.0" stroke="#d09c28" stroke-width="1.6"/><line x1="230.0" y1="63.0" x2="210.0" y2="70.0" stroke="#d09c28" stroke-width="1.6"/><line x1="210.0" y1="59.0" x2="230.0" y2="59.0" stroke="#b9871f" stroke-width="1.1"/><line x1="210.0" y1="63.0" x2="230.0" y2="70.0" stroke="#d09c28" stroke-width="1.6"/><line x1="230.0" y1="70.0" x2="210.0" y2="77.0" stroke="#d09c28" stroke-width="1.6"/><line x1="210.0" y1="66.0" x2="230.0" y2="66.0" stroke="#b9871f" stroke-width="1.1"/><line x1="210.0" y1="70.0" x2="230.0" y2="77.0" stroke="#d09c28" stroke-width="1.6"/><line x1="230.0" y1="77.0" x2="210.0" y2="84.0" stroke="#d09c28" stroke-width="1.6"/><line x1="210.0" y1="73.0" x2="230.0" y2="73.0" stroke="#b9871f" stroke-width="1.1"/><line x1="210.0" y1="77.0" x2="230.0" y2="84.0" stroke="#d09c28" stroke-width="1.6"/><line x1="230.0" y1="84.0" x2="210.0" y2="91.0" stroke="#d09c28" stroke-width="1.6"/><line x1="210.0" y1="80.0" x2="230.0" y2="80.0" stroke="#b9871f" stroke-width="1.1"/><line x1="210.0" y1="84.0" x2="230.0" y2="91.0" stroke="#d09c28" stroke-width="1.6"/><line x1="230.0" y1="91.0" x2="210.0" y2="98.0" stroke="#d09c28" stroke-width="1.6"/><line x1="210.0" y1="87.0" x2="230.0" y2="87.0" stroke="#b9871f" stroke-width="1.1"/><line x1="210.0" y1="91.0" x2="230.0" y2="98.0" stroke="#d09c28" stroke-width="1.6"/><line x1="230.0" y1="98.0" x2="210.0" y2="105.0" stroke="#d09c28" stroke-width="1.6"/><line x1="210.0" y1="94.0" x2="230.0" y2="94.0" stroke="#b9871f" stroke-width="1.1"/><line x1="210.0" y1="98.0" x2="230.0" y2="105.0" stroke="#d09c28" stroke-width="1.6"/><line x1="230.0" y1="105.0" x2="210.0" y2="112.0" stroke="#d09c28" stroke-width="1.6"/><line x1="210.0" y1="101.0" x2="230.0" y2="101.0" stroke="#b9871f" stroke-width="1.1"/><line x1="210.0" y1="105.0" x2="230.0" y2="112.0" stroke="#d09c28" stroke-width="1.6"/><line x1="230.0" y1="112.0" x2="210.0" y2="119.0" stroke="#d09c28" stroke-width="1.6"/><line x1="210.0" y1="108.0" x2="230.0" y2="108.0" stroke="#b9871f" stroke-width="1.1"/><line x1="210.0" y1="112.0" x2="230.0" y2="119.0" stroke="#d09c28" stroke-width="1.6"/><line x1="230.0" y1="119.0" x2="210.0" y2="126.0" stroke="#d09c28" stroke-width="1.6"/><line x1="210.0" y1="115.0" x2="230.0" y2="115.0" stroke="#b9871f" stroke-width="1.1"/><line x1="210.0" y1="119.0" x2="230.0" y2="126.0" stroke="#d09c28" stroke-width="1.6"/><line x1="230.0" y1="126.0" x2="210.0" y2="133.0" stroke="#d09c28" stroke-width="1.6"/><line x1="210.0" y1="122.0" x2="230.0" y2="122.0" stroke="#b9871f" stroke-width="1.1"/><line x1="210.0" y1="126.0" x2="230.0" y2="133.0" stroke="#d09c28" stroke-width="1.6"/><line x1="230.0" y1="133.0" x2="210.0" y2="140.0" stroke="#d09c28" stroke-width="1.6"/><line x1="210.0" y1="129.0" x2="230.0" y2="129.0" stroke="#b9871f" stroke-width="1.1"/><line x1="210.0" y1="133.0" x2="230.0" y2="140.0" stroke="#d09c28" stroke-width="1.6"/><line x1="230.0" y1="140.0" x2="210.0" y2="147.0" stroke="#d09c28" stroke-width="1.6"/><line x1="210.0" y1="136.0" x2="230.0" y2="136.0" stroke="#b9871f" stroke-width="1.1"/><line x1="210.0" y1="140.0" x2="230.0" y2="147.0" stroke="#d09c28" stroke-width="1.6"/><line x1="230.0" y1="147.0" x2="210.0" y2="154.0" stroke="#d09c28" stroke-width="1.6"/><line x1="210.0" y1="143.0" x2="230.0" y2="143.0" stroke="#b9871f" stroke-width="1.1"/><line x1="210.0" y1="147.0" x2="230.0" y2="154.0" stroke="#d09c28" stroke-width="1.6"/><line x1="230.0" y1="154.0" x2="210.0" y2="161.0" stroke="#d09c28" stroke-width="1.6"/><line x1="210.0" y1="150.0" x2="230.0" y2="150.0" stroke="#b9871f" stroke-width="1.1"/><line x1="210.0" y1="154.0" x2="230.0" y2="161.0" stroke="#d09c28" stroke-width="1.6"/><line x1="230.0" y1="161.0" x2="210.0" y2="168.0" stroke="#d09c28" stroke-width="1.6"/><line x1="210.0" y1="157.0" x2="230.0" y2="157.0" stroke="#b9871f" stroke-width="1.1"/><line x1="210.0" y1="161.0" x2="230.0" y2="168.0" stroke="#d09c28" stroke-width="1.6"/><line x1="230.0" y1="168.0" x2="210.0" y2="175.0" stroke="#d09c28" stroke-width="1.6"/><line x1="210.0" y1="164.0" x2="230.0" y2="164.0" stroke="#b9871f" stroke-width="1.1"/><line x1="210.0" y1="168.0" x2="230.0" y2="175.0" stroke="#d09c28" stroke-width="1.6"/><line x1="230.0" y1="175.0" x2="210.0" y2="182.0" stroke="#d09c28" stroke-width="1.6"/><line x1="210.0" y1="171.0" x2="230.0" y2="171.0" stroke="#b9871f" stroke-width="1.1"/><line x1="210.0" y1="175.0" x2="230.0" y2="182.0" stroke="#d09c28" stroke-width="1.6"/><line x1="230.0" y1="182.0" x2="210.0" y2="189.0" stroke="#d09c28" stroke-width="1.6"/><line x1="210.0" y1="178.0" x2="230.0" y2="178.0" stroke="#b9871f" stroke-width="1.1"/><line x1="210.0" y1="182.0" x2="230.0" y2="189.0" stroke="#d09c28" stroke-width="1.6"/><line x1="230.0" y1="189.0" x2="210.0" y2="196.0" stroke="#d09c28" stroke-width="1.6"/><line x1="210.0" y1="185.0" x2="230.0" y2="185.0" stroke="#b9871f" stroke-width="1.1"/><line x1="210.0" y1="189.0" x2="230.0" y2="196.0" stroke="#d09c28" stroke-width="1.6"/><line x1="230.0" y1="196.0" x2="210.0" y2="203.0" stroke="#d09c28" stroke-width="1.6"/><line x1="210.0" y1="192.0" x2="230.0" y2="192.0" stroke="#b9871f" stroke-width="1.1"/><line x1="210.0" y1="196.0" x2="230.0" y2="203.0" stroke="#d09c28" stroke-width="1.6"/><line x1="230.0" y1="203.0" x2="210.0" y2="210.0" stroke="#d09c28" stroke-width="1.6"/><line x1="210.0" y1="199.0" x2="230.0" y2="199.0" stroke="#b9871f" stroke-width="1.1"/><line x1="210.0" y1="203.0" x2="230.0" y2="210.0" stroke="#d09c28" stroke-width="1.6"/><line x1="230.0" y1="210.0" x2="210.0" y2="217.0" stroke="#d09c28" stroke-width="1.6"/><line x1="210.0" y1="206.0" x2="230.0" y2="206.0" stroke="#b9871f" stroke-width="1.1"/><rect x="211.0" y="0.0" width="17.0" height="207.0" fill="#d6a02c" opacity="0.15"/><polygon points="238.0,208.0 262.0,192.0 262.0,200.0 249.0,208.0" fill="#d4a52a"/><rect x="0.0" y="189.0" width="6.0" height="18.0" fill="#7f95b0"/><ellipse cx="15" cy="196" rx="10" ry="9" fill="#4d4843"/><rect x="24.0" y="198.0" width="24.0" height="9.0" fill="#54514d"/><rect x="0.0" y="207.0" width="262.0" height="55.0" fill="#b7b4ae"/><rect x="0.0" y="207.0" width="262.0" height="14.0" fill="#a9a6a1"/><polygon points="26.0,224.0 98.0,221.0 101.0,239.0 28.0,242.0" fill="#d6cf9e"/><polygon points="183.0,230.0 262.0,224.0 262.0,233.0 186.0,239.0" fill="#d0c79a"/><polygon points="0.0,239.0 262.0,256.0 262.0,260.0 0.0,243.0" fill="#cbbcb8"/><polygon points="218.0,213.0 262.0,205.0 262.0,227.0 216.0,237.0" fill="#9a9792"/><rect x="0.0" y="207.0" width="262.0" height="55.0" fill="#6a6a6a" opacity="0.5"/></svg>
<div class="a t" style="left:0;top:218.5px;width:263px;text-align:center;font-size:16.2px;color:#fff">Требуются фасадчики</div>
</div>
<div class="a" style="left:902px;top:390px;width:263px;height:37px;border-radius:3px;background:#e4ecf9;color:#6d7f9c;font-size:15.2px;font-weight:bold;text-align:center;line-height:37px">Добавить рекламный блок</div>

</body></html>
